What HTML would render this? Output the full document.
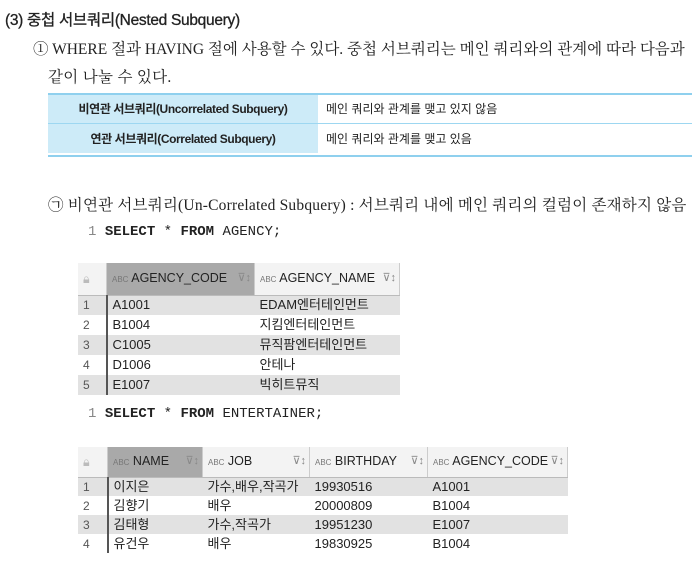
<!DOCTYPE html><html><head><meta charset="utf-8"><style>
body{margin:0;width:700px;height:562px;background:#fff;position:relative;overflow:hidden;font-family:"Liberation Sans","Noto Sans CJK KR",sans-serif;color:#222}
.a{position:absolute;white-space:nowrap}
.serif{font-family:"Liberation Serif","Noto Serif CJK SC","Noto Sans CJK KR",serif;font-size:15.5px;letter-spacing:0.3px}
.mono{font-family:"Liberation Mono",monospace;font-size:14px}
table{border-collapse:collapse;position:absolute;font-size:13px;table-layout:fixed}
.g td{padding:0 0 0 5px;white-space:nowrap;line-height:14px;overflow:hidden}
.g tr.h td{background:#f3f3f3;font-size:12.5px;border-right:1px solid #ccc;border-bottom:1px solid #bbb}
.g tr.h td.s{background:#a9a9a9;}
.g tr.o td{background:#e2e2e2}
.g td.n{color:#555;border-right:2px solid #555;font-size:12px}
.g tr.h td.n{border-right:1px solid #ccc}
.abc{font-size:8px;color:#777}
.fl{float:right;color:#888;font-size:11px;padding-right:3px}
</style></head><body>
<div class="a" style="left:5px;top:8px;font-size:15.5px;letter-spacing:-0.3px;-webkit-text-stroke:0.3px #222">(3) 중첩 서브쿼리(Nested Subquery)</div>
<div class="a serif" style="left:33px;top:37px;letter-spacing:0px">① WHERE 절과 HAVING 절에 사용할 수 있다. 중첩 서브쿼리는 메인 쿼리와의 관계에 따라 다음과</div>
<div class="a serif" style="left:48px;top:65px">같이 나눌 수 있다.</div>
<div class="a" style="left:48px;top:93px;width:644px;height:60px;border-top:2px solid #8fd0ee;border-bottom:2px solid #8fd0ee"></div>
<div class="a" style="left:48px;top:95px;width:270px;height:58px;background:#cdebf8"></div>
<div class="a" style="left:48px;top:123px;width:644px;height:1px;background:#9dd7f1"></div>
<div class="a" style="left:48px;top:100px;width:270px;text-align:center;font-size:12px;font-weight:bold;letter-spacing:-0.4px">비연관 서브쿼리(Uncorrelated Subquery)</div>
<div class="a" style="left:48px;top:130px;width:270px;text-align:center;font-size:12px;font-weight:bold;letter-spacing:-0.4px">연관 서브쿼리(Correlated Subquery)</div>
<div class="a" style="left:326px;top:100px;font-size:12px">메인 쿼리와 관계를 맺고 있지 않음</div>
<div class="a" style="left:326px;top:130px;font-size:12px">메인 쿼리와 관계를 맺고 있음</div>
<div class="a serif" style="left:48px;top:193px;letter-spacing:0.2px">㉠ 비연관 서브쿼리(Un-Correlated Subquery) : 서브쿼리 내에 메인 쿼리의 컬럼이 존재하지 않음</div>
<div class="a mono" style="left:88px;top:224px"><span style="color:#888">1</span> <b>SELECT</b> * <b>FROM</b> AGENCY;</div>
<table class="g" style="left:78px;top:263px;width:322px">
<tr class="h" style="height:32px"><td class="n" style="width:23px;color:#bbb">🔒︎</td><td class="s" style="width:142px"><span class="abc">ABC</span> AGENCY_CODE<span class="fl">⊽↕</span></td><td><span class="abc">ABC</span> AGENCY_NAME<span class="fl">⊽↕</span></td></tr>
<tr class="o" style="height:20px"><td class="n">1</td><td>A1001</td><td>EDAM엔터테인먼트</td></tr>
<tr style="height:20px"><td class="n">2</td><td>B1004</td><td>지킴엔터테인먼트</td></tr>
<tr class="o" style="height:20px"><td class="n">3</td><td>C1005</td><td>뮤직팜엔터테인먼트</td></tr>
<tr style="height:20px"><td class="n">4</td><td>D1006</td><td>안테나</td></tr>
<tr class="o" style="height:20px"><td class="n">5</td><td>E1007</td><td>빅히트뮤직</td></tr>
</table>
<div class="a mono" style="left:88px;top:406px"><span style="color:#888">1</span> <b>SELECT</b> * <b>FROM</b> ENTERTAINER;</div>
<table class="g" style="left:78px;top:447px;width:490px">
<tr class="h" style="height:30px"><td class="n" style="width:24px;color:#bbb">🔒︎</td><td class="s" style="width:89px"><span class="abc">ABC</span> NAME<span class="fl">⊽↕</span></td><td style="width:101px"><span class="abc">ABC</span> JOB<span class="fl">⊽↕</span></td><td style="width:112px"><span class="abc">ABC</span> BIRTHDAY<span class="fl">⊽↕</span></td><td><span class="abc">ABC</span> AGENCY_CODE<span class="fl">⊽↕</span></td></tr>
<tr class="o" style="height:19px"><td class="n">1</td><td>이지은</td><td>가수,배우,작곡가</td><td>19930516</td><td>A1001</td></tr>
<tr style="height:19px"><td class="n">2</td><td>김향기</td><td>배우</td><td>20000809</td><td>B1004</td></tr>
<tr class="o" style="height:19px"><td class="n">3</td><td>김태형</td><td>가수,작곡가</td><td>19951230</td><td>E1007</td></tr>
<tr style="height:19px"><td class="n">4</td><td>유건우</td><td>배우</td><td>19830925</td><td>B1004</td></tr>
</table>
</body></html>
